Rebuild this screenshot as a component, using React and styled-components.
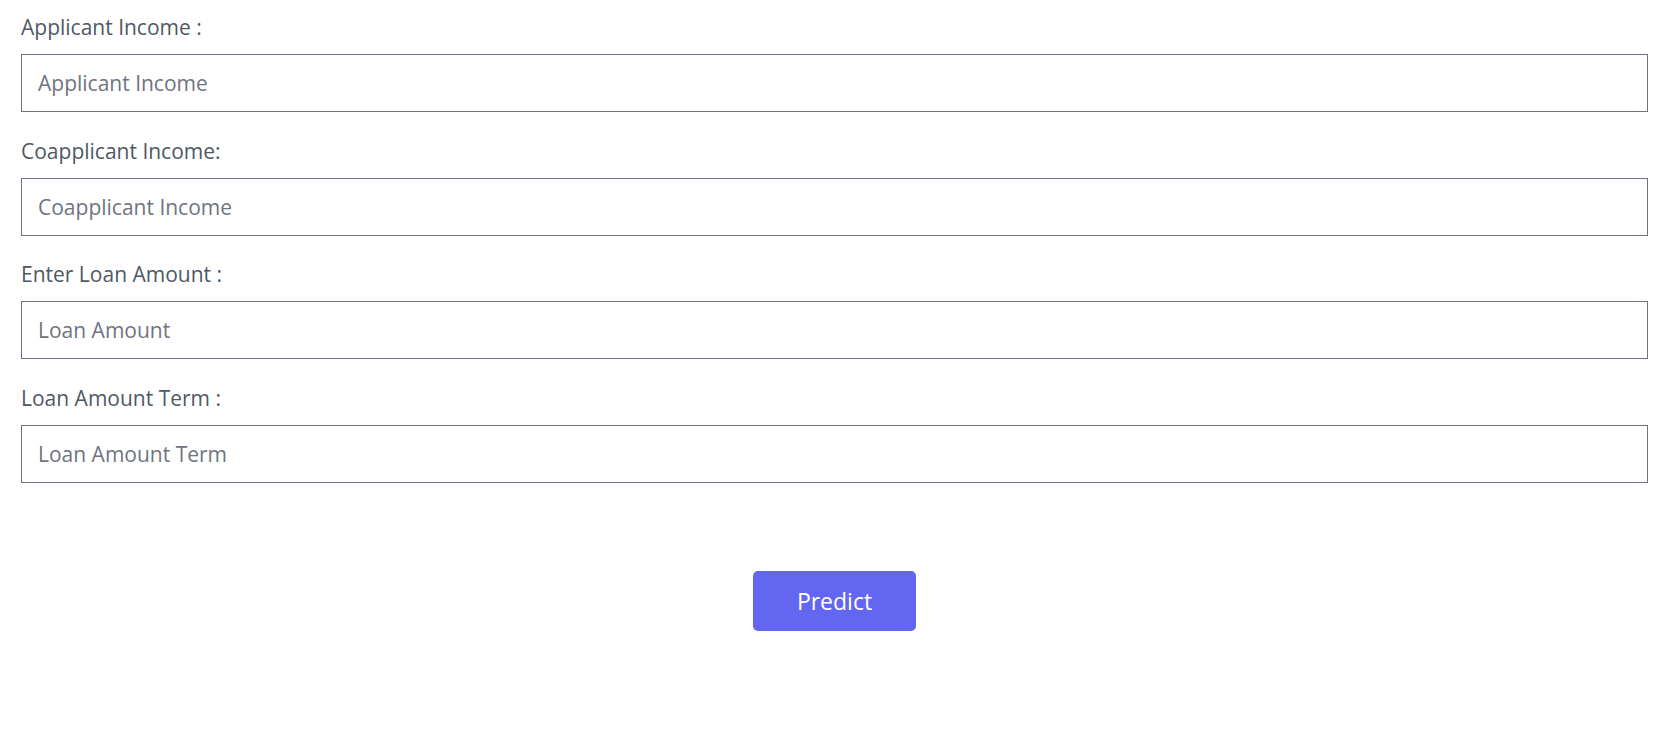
import styled, { createGlobalStyle } from 'styled-components';

const fields = [
   { label: 'Applicant Income :', placeholder: 'Applicant Income' },
   { label: 'Coapplicant Income:', placeholder: 'Coapplicant Income' },
   { label: 'Enter Loan Amount :', placeholder: 'Loan Amount' },
   { label: 'Loan Amount Term :', placeholder: 'Loan Amount Term' },
];

function App() {
   return (
      <>
         <GlobalStyle />
         <Form onSubmit={(e) => e.preventDefault()}>
            {fields.map((field) => (
               <Field key={field.placeholder}>
                  <Label>{field.label}</Label>
                  <Input type="text" placeholder={field.placeholder} />
               </Field>
            ))}
            <Actions>
               <Button type="submit">Predict</Button>
            </Actions>
         </Form>
      </>
   );
}

export default App;

const GlobalStyle = createGlobalStyle`
   body {
      margin: 0;
      background: #ffffff;
      font-family: "Open Sans", "Noto Sans", sans-serif;
   }
`;

const Form = styled.form`
   display: flex;
   flex-direction: column;
   padding: 13px 29px 0 21px;
`;

const Field = styled.div`
   display: flex;
   flex-direction: column;
   margin-bottom: 24.7px;
`;

const Label = styled.label`
   font-size: 21px;
   line-height: 28px;
   color: #4f5865;
   margin-bottom: 13px;
`;

const Input = styled.input`
   box-sizing: border-box;
   height: 58px;
   width: 100%;
   padding: 0 16px;
   border: 1px solid #6b7280;
   border-radius: 0;
   outline: none;
   font-family: inherit;
   font-size: 21px;
   color: #374151;

   &::placeholder {
      color: #6e7480;
   }
`;

const Actions = styled.div`
   display: flex;
   justify-content: center;
   margin-top: 63px;
`;

const Button = styled.button`
   width: 163px;
   height: 60px;
   border: none;
   border-radius: 5px;
   background: #6366f1;
   color: #ffffff;
   font-family: inherit;
   font-size: 23px;
   cursor: pointer;
`;
